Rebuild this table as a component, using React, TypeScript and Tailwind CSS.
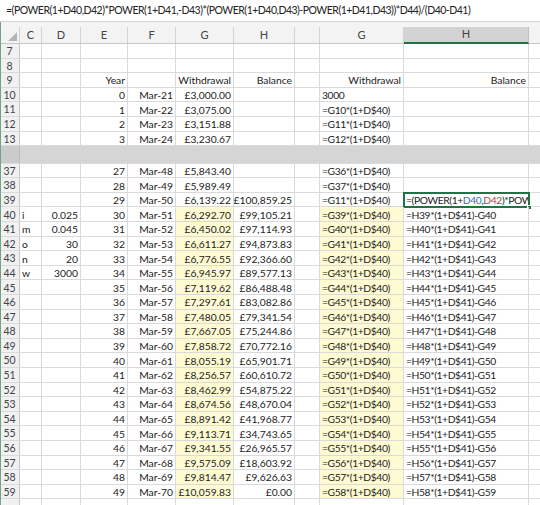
import React from "react";

type Row = {
  n: string;
  c?: string;
  d?: string;
  e?: string;
  f?: string;
  g?: string;
  h?: string;
  g2?: string;
  h2?: React.ReactNode;
  y?: boolean;
  sel?: boolean;
};

const FORMULA =
  "=(POWER(1+D40,D42)*POWER(1+D41,-D43)*(POWER(1+D40,D43)-POWER(1+D41,D43))*D44)/(D40-D41)";

const G_VALS = [
  "£5,843.40", "£5,989.49", "£6,139.22", "£6,292.70", "£6,450.02", "£6,611.27",
  "£6,776.55", "£6,945.97", "£7,119.62", "£7,297.61", "£7,480.05", "£7,667.05",
  "£7,858.72", "£8,055.19", "£8,256.57", "£8,462.99", "£8,674.56", "£8,891.42",
  "£9,113.71", "£9,341.55", "£9,575.09", "£9,814.47", "£10,059.83",
];

const H_VALS = [
  "", "", "£100,859.25", "£99,105.21", "£97,114.93", "£94,873.83", "£92,366.60",
  "£89,577.13", "£86,488.48", "£83,082.86", "£79,341.54", "£75,244.86",
  "£70,772.16", "£65,901.71", "£60,610.72", "£54,875.22", "£48,670.04",
  "£41,968.77", "£34,743.65", "£26,965.57", "£18,603.92", "£9,626.63", "£0.00",
];

const PARAMS: Record<number, [string, string]> = {
  40: ["i", "0.025"],
  41: ["m", "0.045"],
  42: ["o", "30"],
  43: ["n", "20"],
  44: ["w", "3000"],
};

const TOP_ROWS: Row[] = [
  { n: "7" },
  { n: "8" },
  { n: "9", e: "Year", g: "Withdrawal", h: "Balance", g2: "Withdrawal", h2: "Balance" },
  { n: "10", e: "0", f: "Mar-21", g: "£3,000.00", g2: "3000" },
  { n: "11", e: "1", f: "Mar-22", g: "£3,075.00", g2: "=G10*(1+D$40)" },
  { n: "12", e: "2", f: "Mar-23", g: "£3,151.88", g2: "=G11*(1+D$40)" },
  { n: "13", e: "3", f: "Mar-24", g: "£3,230.67", g2: "=G12*(1+D$40)" },
];

const SELECTED = (
  <span>
    =(POWER(1+<span className="text-[#2f6fce]">D40</span>,
    <span className="text-[#c8354f]">D42</span>)*POW
  </span>
);

const BOTTOM_ROWS: Row[] = G_VALS.map((g, i) => {
  const n = 37 + i;
  const p = PARAMS[n];
  let g2 = `=G${n - 1}*(1+D$40)`;
  if (n === 39) g2 = "=G11*(1+D$40)";
  let h2: React.ReactNode = "";
  if (n === 39) h2 = SELECTED;
  if (n >= 40) h2 = `=H${n - 1}*(1+D$41)-G${n}`;
  return {
    n: String(n),
    c: p ? p[0] : "",
    d: p ? p[1] : "",
    e: String(27 + i),
    f: `Mar-${48 + i}`,
    g,
    h: H_VALS[i],
    g2,
    h2,
    y: n >= 40,
    sel: n === 39,
  };
});

function Cell({
  w,
  right,
  yellow,
  tight,
  children,
}: {
  w: string;
  right?: boolean;
  yellow?: boolean;
  tight?: boolean;
  children?: React.ReactNode;
}) {
  return (
    <div
      className={`${w} shrink-0 h-full flex items-end overflow-hidden whitespace-nowrap border-r border-[#dadada] px-[2px] pb-[1px] ${
        right ? "justify-end" : "justify-start"
      } ${yellow ? "bg-[#fefbd2]" : ""} ${tight ? "tracking-[-0.4px]" : ""}`}
    >
      {children}
    </div>
  );
}

function SheetRow({ r }: { r: Row }) {
  const head = r.n === "9";
  return (
    <div className="relative flex h-[14.6px] border-b border-[#dadada] text-[10.3px] leading-none text-[#222]">
      <div className="w-[20px] shrink-0 h-full flex items-end justify-center pb-[1px] bg-[#f1f1f1] border-r border-[#c6c6c6] text-[#444] text-[10.5px]">
        {r.n}
      </div>
      <Cell w="w-[22px]">{r.c}</Cell>
      <Cell w="w-[39px]" right>{r.d}</Cell>
      <Cell w="w-[47px]" right>{r.e}</Cell>
      <Cell w="w-[48px]" right>{r.f}</Cell>
      <Cell w="w-[58px]" right yellow={r.y}>{r.g}</Cell>
      <Cell w="w-[61px]" right>{r.h}</Cell>
      <Cell w="w-[25px]" />
      <Cell w="w-[84px]" right={head} yellow={r.y} tight={!head}>{r.g2}</Cell>
      <Cell w="w-[125px]" right={head} tight={!head}>{r.h2}</Cell>
      <div className="flex-1" />
      {r.sel && (
        <div className="absolute left-[403px] top-[-1px] w-[127px] h-[16px] border-2 border-[#217346] pointer-events-none">
          <div className="absolute right-[-4px] bottom-[-4px] w-[5px] h-[5px] bg-[#217346] border border-white" />
        </div>
      )}
    </div>
  );
}

function HeaderRow() {
  const cols: [string, string][] = [
    ["w-[22px]", "C"],
    ["w-[39px]", "D"],
    ["w-[47px]", "E"],
    ["w-[48px]", "F"],
    ["w-[58px]", "G"],
    ["w-[61px]", "H"],
    ["w-[25px]", ""],
    ["w-[84px]", "G"],
  ];
  return (
    <div className="flex h-[17px] bg-[#f3f3f3] border-b border-[#c6c6c6] text-[11px] text-[#444]">
      <div className="w-[20px] shrink-0 relative border-r border-[#d4d4d4]">
        <svg className="absolute right-[2px] bottom-[2px]" width="9" height="9" viewBox="0 0 9 9">
          <polygon points="9,0 9,9 0,9" fill="#b4b4b4" />
        </svg>
      </div>
      {cols.map(([w, l], i) => (
        <div key={i} className={`${w} shrink-0 flex items-center justify-center border-r border-[#d4d4d4]`}>
          {l}
        </div>
      ))}
      <div className="w-[125px] shrink-0 flex items-center justify-center bg-[#d3d3d3] border-r border-[#c0c0c0] border-b-2 border-b-[#217346] mb-[-1px]">
        H
      </div>
      <div className="flex-1" />
    </div>
  );
}

export default function App() {
  return (
    <div className="w-[540px] h-[505px] overflow-hidden bg-white font-['Lato','Liberation_Sans',sans-serif] relative">
      {/* formula bar */}
      <div className="h-[22px] flex items-center pl-[6px] text-[10.5px] tracking-[-0.5px] text-[#222] whitespace-nowrap border-b border-[#d6d6d6]">
        <span>{FORMULA}</span>
      </div>
      <div className="h-[5px] bg-[#f4f4f4]" />
      <HeaderRow />
      {TOP_ROWS.map((r) => (
        <SheetRow key={r.n} r={r} />
      ))}
      {/* collapsed band */}
      <div className="flex h-[17.5px] bg-[#d5d5d5] border-b border-[#dadada]">
        <div className="w-[20px] h-full bg-[#cbcbcb] border-r border-[#bdbdbd]" />
      </div>
      {BOTTOM_ROWS.map((r) => (
        <SheetRow key={r.n} r={r} />
      ))}
      <SheetRow r={{ n: "" }} />
      <div className="absolute left-0 top-[22px] bottom-0 w-[1px] bg-[#6fa583]" />
    </div>
  );
}
